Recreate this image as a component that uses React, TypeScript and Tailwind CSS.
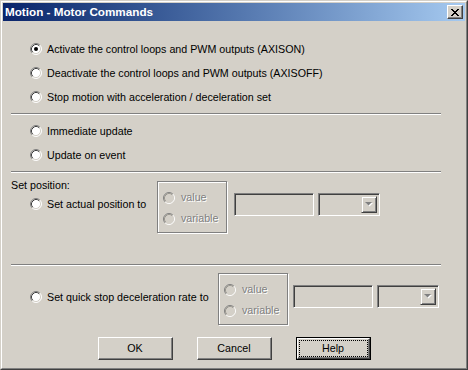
import React from "react";

const font = "font-['Liberation_Sans',Arial,sans-serif]";

function Radio({ checked = false, disabled = false }: { checked?: boolean; disabled?: boolean }) {
  return (
    <svg width="12" height="12" viewBox="0 0 12 12" className="shrink-0">
      <circle cx="6" cy="6" r="5" fill={disabled ? "#d4d0c8" : "#fff"} />
      <path d="M2.11 9.89 A5.5 5.5 0 0 1 9.89 2.11" stroke="#808080" fill="none" />
      <path d="M9.89 2.11 A5.5 5.5 0 0 1 2.11 9.89" stroke="#fff" fill="none" />
      <path d="M2.82 9.18 A4.5 4.5 0 0 1 9.18 2.82" stroke={disabled ? "#9a978f" : "#404040"} fill="none" />
      <path d="M9.18 2.82 A4.5 4.5 0 0 1 2.82 9.18" stroke="#d4d0c8" fill="none" />
      {checked && <circle cx="6" cy="6" r="2" fill="#000" />}
    </svg>
  );
}

function RadioRow({ label, checked = false }: { label: string; checked?: boolean }) {
  return (
    <div className="h-[24px] pl-[19px] flex items-center gap-[5px]">
      <Radio checked={checked} />
      <span>{label}</span>
    </div>
  );
}

function Separator({ className = "" }: { className?: string }) {
  return <div className={`w-[430px] h-[2px] border-t border-t-[#808080] border-b border-b-white ${className}`} />;
}

function ValueGroup() {
  return (
    <div className="w-[70px] h-[52px] border border-[#808080] shadow-[inset_1px_1px_0_#fff,1px_1px_0_#fff] pt-[5px] pl-[5px]">
      {["value", "variable"].map((l) => (
        <div key={l} className="h-[21px] flex items-center gap-[6px]">
          <Radio disabled />
          <span className="text-[#808080] [text-shadow:1px_1px_0_#fff]">{l}</span>
        </div>
      ))}
    </div>
  );
}

function TextBox() {
  return (
    <div className="w-[80px] h-[23px] border border-t-[#808080] border-l-[#808080] border-r-white border-b-white shadow-[inset_1px_1px_0_#404040,inset_-1px_-1px_0_#d4d0c8]" />
  );
}

function Combo() {
  return (
    <div className="w-[62px] h-[23px] p-[2px] flex justify-end border border-t-[#808080] border-l-[#808080] border-r-white border-b-white shadow-[inset_1px_1px_0_#404040,inset_-1px_-1px_0_#d4d0c8]">
      <div className="w-[16px] h-full flex items-center justify-center border border-t-[#d4d0c8] border-l-[#d4d0c8] border-r-[#404040] border-b-[#404040] shadow-[inset_1px_1px_0_#fff,inset_-1px_-1px_0_#808080]">
        <svg width="8" height="5" viewBox="0 0 8 5">
          <path d="M1 1h7L4.5 4.5z" fill="#fff" />
          <path d="M0 0h7L3.5 3.5z" fill="#808080" />
        </svg>
      </div>
    </div>
  );
}

function Button({ label, isDefault = false }: { label: string; isDefault?: boolean }) {
  const raised =
    "border border-t-white border-l-white border-r-[#404040] border-b-[#404040] shadow-[inset_-1px_-1px_0_#808080]";
  if (isDefault) {
    return (
      <div className="w-[75px] h-[23px] border border-black">
        <div className={`h-full p-px ${raised}`}>
          <div className="h-full border border-dotted border-black flex items-center justify-center">{label}</div>
        </div>
      </div>
    );
  }
  return <div className={`w-[75px] h-[23px] flex items-center justify-center ${raised}`}>{label}</div>;
}

export default function App() {
  return (
    <div className={`w-[468px] h-[370px] bg-[#d4d0c8] text-[10.7px] leading-[13px] text-black ${font} border border-t-[#d4d0c8] border-l-[#d4d0c8] border-r-[#404040] border-b-[#404040]`}>
      <div className="h-full p-px flex flex-col border border-t-white border-l-white border-r-[#808080] border-b-[#808080]">
        {/* caption */}
        <div className="h-[18px] shrink-0 flex items-center justify-between pl-[2px] pr-[2px] bg-gradient-to-r from-[#0a246a] to-[#a6caf0]">
          <span className="text-white font-bold text-[11.7px] leading-[14px]">Motion - Motor Commands</span>
          <div className="w-[16px] h-[14px] bg-[#d4d0c8] flex items-center justify-center border border-t-white border-l-white border-r-[#404040] border-b-[#404040] shadow-[inset_-1px_-1px_0_#808080]">
            <svg width="8" height="7" viewBox="0 0 8 7" shapeRendering="crispEdges">
              <path d="M0 0h2v1h1v1h2V1h1V0h2v1H7v1H6v1H5v1h1v1h1v1h1v1H6V6H5V5H3v1H2v1H0V6h1V5h1V4h1V3H2V2H1V1H0z" fill="#000" />
            </svg>
          </div>
        </div>

        {/* body */}
        <div className="flex-1 px-[8px] pt-[16px]">
          <RadioRow label="Activate the control loops and PWM outputs (AXISON)" checked />
          <RadioRow label="Deactivate the control loops and PWM outputs (AXISOFF)" />
          <RadioRow label="Stop motion with acceleration / deceleration set" />
          <Separator className="mt-[4px]" />
          <div className="mt-[4px]">
            <RadioRow label="Immediate update" />
            <RadioRow label="Update on event" />
          </div>
          <Separator className="mt-[4px]" />

          <div className="flex items-start">
            <div className="w-[146px] pt-[6px]">
              <div>Set position:</div>
              <RadioRow label="Set actual position to" />
            </div>
            <div className="mt-[8px]">
              <ValueGroup />
            </div>
            <div className="mt-[20px] ml-[7px] flex gap-[4px]">
              <TextBox />
              <Combo />
            </div>
          </div>

          <Separator className="mt-[31px]" />

          <div className="flex items-start">
            <div className="w-[207px] mt-[19px]">
              <RadioRow label="Set quick stop deceleration rate to" />
            </div>
            <div className="mt-[7px]">
              <ValueGroup />
            </div>
            <div className="mt-[19px] ml-[5px] flex gap-[4px]">
              <TextBox />
              <Combo />
            </div>
          </div>

          <div className="mt-[12px] flex justify-center gap-[24px]">
            <Button label="OK" />
            <Button label="Cancel" />
            <Button label="Help" isDefault />
          </div>
        </div>
      </div>
    </div>
  );
}
